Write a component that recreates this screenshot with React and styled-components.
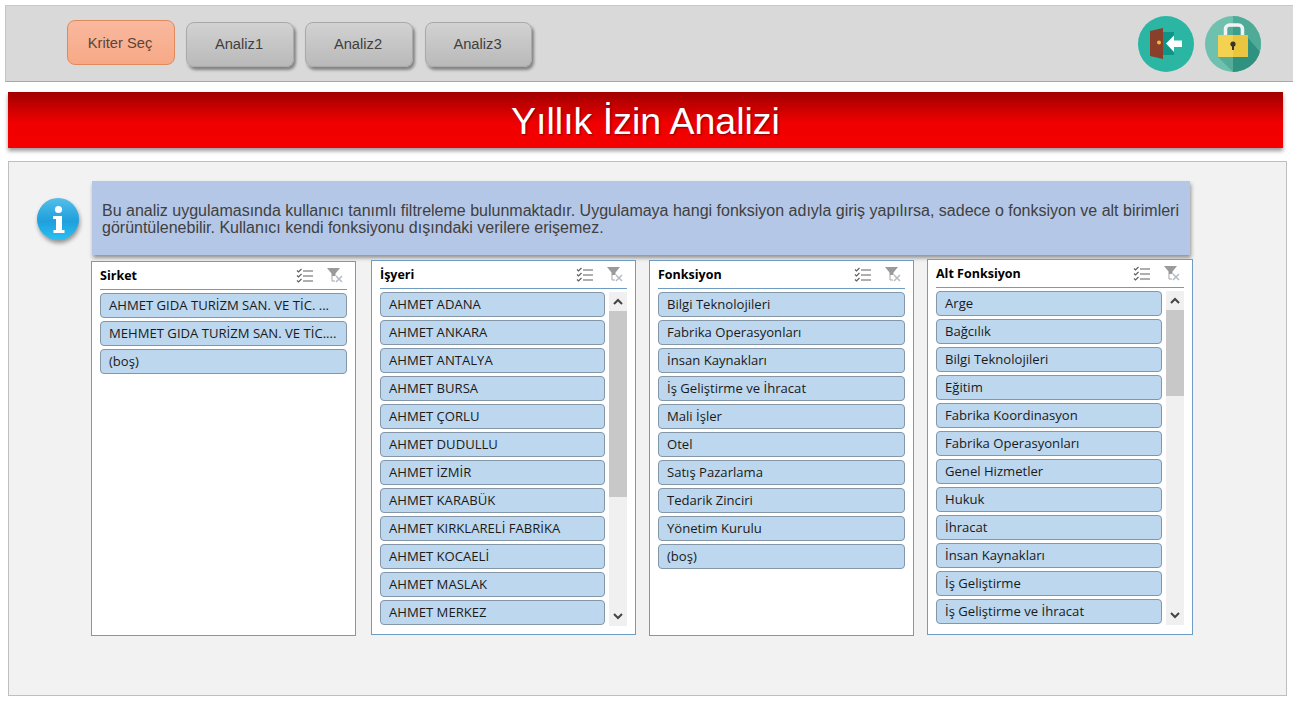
import React from "react";
import styled, { createGlobalStyle } from "styled-components";

const slicers = [
	{
		title: "Sirket",
		offset: 2,
		height: 375,
		width: 265,
		items: [
			"AHMET GIDA TURİZM SAN. VE TİC. ...",
			"MEHMET GIDA TURİZM SAN. VE TİC....",
			"(boş)",
		],
	},
	{
		title: "İşyeri",
		offset: 1,
		height: 375,
		width: 265,
		scroll: { top: 0, size: 186 },
		items: [
			"AHMET ADANA",
			"AHMET ANKARA",
			"AHMET ANTALYA",
			"AHMET BURSA",
			"AHMET ÇORLU",
			"AHMET DUDULLU",
			"AHMET İZMİR",
			"AHMET KARABÜK",
			"AHMET KIRKLARELİ FABRİKA",
			"AHMET KOCAELİ",
			"AHMET MASLAK",
			"AHMET MERKEZ",
		],
	},
	{
		title: "Fonksiyon",
		offset: 1,
		height: 376,
		width: 265,
		items: [
			"Bilgi Teknolojileri",
			"Fabrika Operasyonları",
			"İnsan Kaynakları",
			"İş Geliştirme ve İhracat",
			"Mali İşler",
			"Otel",
			"Satış Pazarlama",
			"Tedarik Zinciri",
			"Yönetim Kurulu",
			"(boş)",
		],
	},
	{
		title: "Alt Fonksiyon",
		offset: 0,
		height: 376,
		width: 266,
		scroll: { top: 0, size: 86 },
		items: [
			"Arge",
			"Bağcılık",
			"Bilgi Teknolojileri",
			"Eğitim",
			"Fabrika Koordinasyon",
			"Fabrika Operasyonları",
			"Genel Hizmetler",
			"Hukuk",
			"İhracat",
			"İnsan Kaynakları",
			"İş Geliştirme",
			"İş Geliştirme ve İhracat",
		],
	},
];

function DoorIcon() {
	return (
		<svg width="56" height="56" viewBox="0 0 56 56">
			<circle cx="28" cy="28" r="28" fill="#2bb5a3" />
			<path d="M25 16h11v23H25z" fill="#0f9488" />
			<path d="M12 15l13-3v31l-13-3z" fill="#8a3f2b" />
			<circle cx="21" cy="26.500" r="2" fill="#f5b63a" />
			<path d="M28 27.500l8-8v5h8v6.500h-8v5z" fill="#fff" />
		</svg>
	);
}

function LockIcon() {
	return (
		<svg width="56" height="56" viewBox="0 0 56 56">
			<defs>
				<clipPath id="lockCircle">
					<circle cx="28" cy="28" r="28" />
				</clipPath>
			</defs>
			<g clipPath="url(#lockCircle)">
				<rect width="56" height="56" fill="#6dc1ae" />
				<rect x="28" width="28" height="56" fill="#4fab97" />
				<path d="M13 41h15v15H28z" fill="#55ac99" />
				<path d="M28 41h15V22l13 15v19H28z" fill="#2f917f" />
				<rect x="22" y="11" width="6" height="9" fill="#55ac99" />
				<rect x="28" y="11" width="7" height="9" fill="#3d9f8b" />
			</g>
			<path
				d="M20.500 20V13a4 4 0 0 1 4-4h9a4 4 0 0 1 4 4v7"
				fill="none"
				stroke="#f2f2f2"
				strokeWidth="3.500"
			/>
			<rect x="13" y="19" width="30" height="22" fill="#f2d250" />
			<rect x="28" y="19" width="15" height="22" fill="#eac53f" />
			<circle cx="28" cy="28" r="2.600" fill="#3b3326" />
			<rect x="27" y="29" width="2" height="5" fill="#3b3326" />
		</svg>
	);
}

function InfoIcon() {
	return (
		<svg width="44" height="44" viewBox="0 0 44 44">
			<defs>
				<linearGradient id="infoFill" x1="0" y1="0" x2="0" y2="1">
					<stop offset="0" stopColor="#54bfe8" />
					<stop offset="0.55" stopColor="#1f9fdc" />
					<stop offset="1" stopColor="#29c0f2" />
				</linearGradient>
			</defs>
			<circle cx="22" cy="21" r="21" fill="url(#infoFill)" />
			<circle cx="22.500" cy="11.500" r="3.600" fill="#fff" />
			<path d="M17 18h9v14h2.500v3h-11v-3h2.500V21H17z" fill="#fff" />
		</svg>
	);
}

function ChecklistIcon() {
	return (
		<svg width="18" height="16" viewBox="0 0 18 16">
			<g fill="none" stroke="#5f5f5f" strokeWidth="1.200">
				<path d="M1 2.500l1.500 1.500L5.500 1M1 7.500L2.500 9l3-3M1 12.500L2.500 14l3-3" />
				<path d="M7 3h10M7 8h10M7 13h10" />
			</g>
		</svg>
	);
}

function ClearFilterIcon() {
	return (
		<svg width="18" height="17" viewBox="0 0 18 17">
			<path d="M1 1h13L9.500 6.500V9h-4V6.500z" fill="#9a9a9a" />
			<path d="M6 9v5h3" fill="none" stroke="#a5a5a5" />
			<path d="M10 9l6 6M16 9l-6 6" stroke="#b4bcc4" strokeWidth="1.500" />
		</svg>
	);
}

function Slicer({ title, items, offset, height, width, scroll }) {
	return (
		<SlicerBox $offset={offset} $height={height} $width={width}>
			<SlicerHead>
				<SlicerTitle>{title}</SlicerTitle>
				<ChecklistIcon />
				<ClearFilterIcon />
			</SlicerHead>
			<SlicerBody>
				<ItemList>
					{items.map((item) => (
						<Item key={item}>{item}</Item>
					))}
				</ItemList>
				{scroll && (
					<ScrollTrack>
						<ScrollArrow>
							<svg width="10" height="7" viewBox="0 0 10 7">
								<path d="M1 6l4-4 4 4" fill="none" stroke="#444" strokeWidth="2" />
							</svg>
						</ScrollArrow>
						<ScrollThumb $size={scroll.size} />
						<ScrollSpace />
						<ScrollArrow>
							<svg width="10" height="7" viewBox="0 0 10 7">
								<path d="M1 1l4 4 4-4" fill="none" stroke="#444" strokeWidth="2" />
							</svg>
						</ScrollArrow>
					</ScrollTrack>
				)}
			</SlicerBody>
		</SlicerBox>
	);
}

export default function App() {
	return (
		<>
			<GlobalStyle />
			<TopBar>
				<NavButtons>
					<ActiveButton>Kriter Seç</ActiveButton>
					<NavButton>Analiz1</NavButton>
					<NavButton>Analiz2</NavButton>
					<NavButton $wide>Analiz3</NavButton>
				</NavButtons>
				<RoundIcons>
					<DoorIcon />
					<LockIcon />
				</RoundIcons>
			</TopBar>
			<TitleBar>Yıllık İzin Analizi</TitleBar>
			<Panel>
				<InfoSlot>
					<InfoIcon />
				</InfoSlot>
				<PanelContent>
					<Note>
						Bu analiz uygulamasında kullanıcı tanımlı filtreleme bulunmaktadır.
						Uygulamaya hangi fonksiyon adıyla giriş yapılırsa, sadece o fonksiyon
						ve alt birimleri görüntülenebilir. Kullanıcı kendi fonksiyonu dışındaki
						verilere erişemez.
					</Note>
					<SlicerRow>
						{slicers.map((s) => (
							<Slicer key={s.title} {...s} />
						))}
					</SlicerRow>
				</PanelContent>
			</Panel>
		</>
	);
}

const GlobalStyle = createGlobalStyle`
	html, body {
		margin: 0;
		padding: 0;
		background: #fff;
		font-family: "Liberation Sans", Arial, sans-serif;
	}
	* {
		box-sizing: border-box;
	}
`;

const TopBar = styled.div`
	margin: 5px 0 0 5px;
	height: 77px;
	background-color: #d9d9d9;
	border-top: 1px solid #c8c8c8;
	border-left: 1px solid #c4c4c4;
	border-bottom: 1px solid #a8a8a8;
	display: flex;
	align-items: flex-start;
	justify-content: space-between;
	padding-left: 61px;
`;

const NavButtons = styled.div`
	display: flex;
	align-items: flex-start;
	gap: 11px;
	padding-top: 14px;
`;

const NavButton = styled.div`
	width: ${(p) => (p.$wide ? "107px" : "108px")};
	height: 45px;
	margin-top: 2px;
	margin-left: ${(p) => (p.$wide ? "1px" : "0")};
	padding: 0 2px 2px 0;
	border-radius: 8px;
	border: 1px solid #a9a9a9;
	background: linear-gradient(#d2d2d2, #b9b9b9);
	box-shadow: 2px 3px 3px rgba(0, 0, 0, 0.4);
	color: #404040;
	font-size: 14.7px;
	display: flex;
	align-items: center;
	justify-content: center;
`;

const ActiveButton = styled(NavButton)`
	margin-top: 0;
	padding-bottom: 0;
	border: 1px solid #e08a5c;
	background: linear-gradient(#f9b89f, #f7a986);
	box-shadow: none;
	color: #5c4438;
`;

const RoundIcons = styled.div`
	display: flex;
	gap: 11px;
	padding: 10px 32px 0 0;
`;

const TitleBar = styled.div`
	margin: 10px 10px 0 8px;
	height: 56px;
	padding-top: 2px;
	background: linear-gradient(#a00000, #f00000 55%, #f50000);
	box-shadow: 0 3px 4px rgba(0, 0, 0, 0.4);
	color: #fff;
	font-size: 37.5px;
	line-height: 54px;
	text-align: center;
	text-shadow: 1px 1px 2px rgba(0, 0, 0, 0.45);
`;

const Panel = styled.div`
	margin: 13px 6px 0 8px;
	height: 535px;
	background-color: #f2f2f2;
	border: 1px solid #bfbfbf;
	display: flex;
	align-items: flex-start;
	padding: 19px 0 0 27px;
`;

const InfoSlot = styled.div`
	width: 55px;
	padding-top: 17px;
	filter: drop-shadow(1px 3px 2px rgba(0, 0, 0, 0.4));

	svg {
		display: block;
	}
`;

const PanelContent = styled.div`
	display: flex;
	flex-direction: column;
`;

const Note = styled.div`
	width: 1098px;
	height: 74px;
	margin-left: 1px;
	background-color: #b4c7e7;
	box-shadow: 1px 3px 4px rgba(0, 0, 0, 0.4);
	color: #404040;
	font-size: 16px;
	line-height: 17px;
	padding: 21px 8px 0 10px;
`;

const SlicerRow = styled.div`
	display: flex;
	align-items: flex-start;
	gap: 13px;
	margin-top: 4px;
	position: relative;
`;

const SlicerBox = styled.div`
	width: ${(p) => p.$width}px;
	height: ${(p) => p.$height}px;
	margin-top: ${(p) => p.$offset}px;
	background-color: #fff;
	border: 1px solid #6f9cc4;
	padding: 0 8px;
	color: #1a1a1a;
	font-family: "Open Sans", Lato, sans-serif;

	&:first-child {
		margin-right: 2px;
	}
`;

const SlicerHead = styled.div`
	height: 28px;
	border-bottom: 1px solid #6f9cc4;
	display: flex;
	align-items: center;
	gap: 12px;
	padding-right: 3px;
	margin-bottom: 3px;
`;

const SlicerTitle = styled.div`
	flex: 1;
	font-size: 12.5px;
	font-weight: 700;
	color: #000;
`;

const SlicerBody = styled.div`
	display: flex;
	gap: 4px;
`;

const ItemList = styled.div`
	flex: 1;
	min-width: 0;
	display: flex;
	flex-direction: column;
	gap: 3px;
`;

const Item = styled.div`
	height: 25px;
	line-height: 23px;
	padding-left: 8px;
	background-color: #bdd7ee;
	border: 1px solid #8497a8;
	border-radius: 4px;
	font-size: 13.1px;
	white-space: nowrap;
	overflow: hidden;
`;

const ScrollTrack = styled.div`
	width: 18px;
	height: 334px;
	background-color: #f0f0f0;
	display: flex;
	flex-direction: column;
`;

const ScrollArrow = styled.div`
	height: 19px;
	display: flex;
	align-items: center;
	justify-content: center;
`;

const ScrollThumb = styled.div`
	height: ${(p) => p.$size}px;
	background-color: #c8c8c8;
`;

const ScrollSpace = styled.div`
	flex: 1;
`;
